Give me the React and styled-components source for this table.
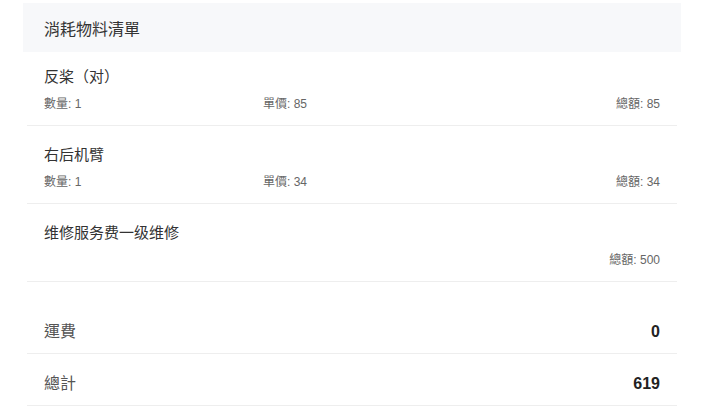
import styled, { createGlobalStyle } from 'styled-components'

const GlobalStyle = createGlobalStyle`
    body {
        margin: 0;
        background: #ffffff;
        font-family: "Liberation Sans", "Noto Sans CJK TC", Arial, sans-serif;
    }
`

const Page = styled.div`
    width: 658px;
    margin-left: 23px;
    padding-top: 3px;
`

const Header = styled.div`
    height: 49px;
    background-color: #f7f8fa;
    display: flex;
    align-items: center;
    padding-left: 21px;
    font-size: 16px;
    color: #333;
`

const ItemList = styled.div`
    display: flex;
    flex-direction: column;
`

const Item = styled.div`
    margin: 0 4px;
    padding: 18px 17px 12px;
    border-bottom: 1px solid #eeeeee;

    &:first-child {
        padding-top: 14px;
    }
`

const ItemName = styled.div`
    font-size: 15px;
    line-height: 22px;
    color: #333;
`

const Details = styled.div`
    display: grid;
    grid-template-columns: 219px 1fr auto;
    margin-top: 7px;
    font-size: 12px;
    line-height: 18px;
    color: #666;
`

const TotalCell = styled.span`
    grid-column: 3;
    text-align: right;
`

const Summary = styled.div`
    margin-top: 20px;
`

const SummaryRow = styled.div`
    margin: 0 4px;
    padding: 19px 17px 10px;
    border-bottom: 1px solid #eeeeee;
    display: flex;
    justify-content: space-between;
    align-items: center;
    line-height: 22px;
`

const SummaryLabel = styled.span`
    font-size: 16px;
    color: #555;
`

const SummaryValue = styled.span`
    font-size: 16px;
    font-weight: bold;
    color: #222;
`

const items = [
    { name: '反桨（对）', qty: 1, price: 85, total: 85 },
    { name: '右后机臂', qty: 1, price: 34, total: 34 },
    { name: '维修服务费一级维修', total: 500 },
]

function App() {
    return (
        <>
            <GlobalStyle />
            <Page>
                <Header>消耗物料清單</Header>
                <ItemList>
                    {items.map((item) => (
                        <Item key={item.name}>
                            <ItemName>{item.name}</ItemName>
                            <Details>
                                {item.qty !== undefined && <span>數量: {item.qty}</span>}
                                {item.price !== undefined && <span>單價: {item.price}</span>}
                                <TotalCell>總額: {item.total}</TotalCell>
                            </Details>
                        </Item>
                    ))}
                </ItemList>
                <Summary>
                    <SummaryRow>
                        <SummaryLabel>運費</SummaryLabel>
                        <SummaryValue>0</SummaryValue>
                    </SummaryRow>
                    <SummaryRow>
                        <SummaryLabel>總計</SummaryLabel>
                        <SummaryValue>619</SummaryValue>
                    </SummaryRow>
                </Summary>
            </Page>
        </>
    )
}

export default App
